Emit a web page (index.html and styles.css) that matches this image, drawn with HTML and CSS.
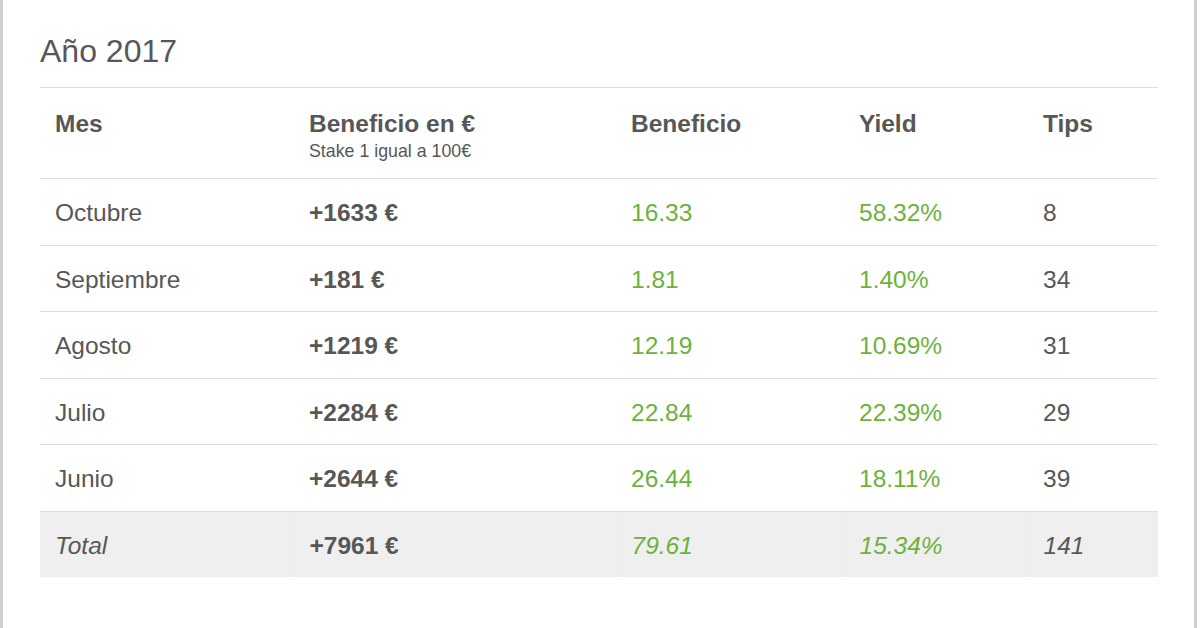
FILE: index.html
```html
<!DOCTYPE html>
<html lang="es">
<head>
<meta charset="utf-8">
<title>Año 2017</title>
<link rel="stylesheet" href="styles.css">
</head>
<body>
<div class="frame">
  <div class="panel">
    <h2 class="title">Año 2017</h2>
    <table class="stats">
      <colgroup>
        <col class="c1"><col class="c2"><col class="c3"><col class="c4"><col class="c5">
      </colgroup>
      <thead>
        <tr>
          <th>Mes</th>
          <th>Beneficio en €<span class="sub">Stake 1 igual a 100€</span></th>
          <th>Beneficio</th>
          <th>Yield</th>
          <th>Tips</th>
        </tr>
      </thead>
      <tbody>
        <tr><td>Octubre</td><td class="b">+1633 €</td><td class="g">16.33</td><td class="g">58.32%</td><td>8</td></tr>
        <tr><td>Septiembre</td><td class="b">+181 €</td><td class="g">1.81</td><td class="g">1.40%</td><td>34</td></tr>
        <tr><td>Agosto</td><td class="b">+1219 €</td><td class="g">12.19</td><td class="g">10.69%</td><td>31</td></tr>
        <tr><td>Julio</td><td class="b">+2284 €</td><td class="g">22.84</td><td class="g">22.39%</td><td>29</td></tr>
        <tr><td>Junio</td><td class="b">+2644 €</td><td class="g">26.44</td><td class="g">18.11%</td><td>39</td></tr>
        <tr class="total"><td class="i">Total</td><td class="b">+7961 €</td><td class="g i">79.61</td><td class="g i">15.34%</td><td class="i">141</td></tr>
      </tbody>
    </table>
  </div>
</div>
</body>
</html>
```
FILE: styles.css
```css
html, body {
  margin: 0;
  padding: 0;
  background: #fff;
}
body {
  font-family: "Liberation Sans", Arial, sans-serif;
  color: #575757;
}
.frame {
  width: 1200px;
  height: 628px;
  box-sizing: border-box;
  padding: 0 3px 0 0;
  background: #fff;
}
.panel {
  height: 628px;
  box-sizing: border-box;
  border-left: 3px solid #cfcfcf;
  border-right: 3px solid #cfcfcf;
  padding: 33px 36px 0 37px;
}
.title {
  margin: 0;
  font-weight: normal;
  font-size: 32px;
  line-height: 37px;
  color: #575757;
  height: 54px;
}
.stats {
  width: 1118px;
  border-collapse: collapse;
  table-layout: fixed;
  font-size: 24.5px;
}
.c1 { width: 254px; }
.c2 { width: 322px; }
.c3 { width: 228px; }
.c4 { width: 184px; }
.c5 { width: 130px; }
.stats th {
  text-align: left;
  font-weight: bold;
  vertical-align: top;
  padding: 21px 15px 0 15px;
  height: 69px;
  line-height: 29px;
  border-top: 1px solid #dedede;
  border-bottom: 1px solid #dedede;
}
.sub {
  display: block;
  font-weight: normal;
  font-size: 17.8px;
  line-height: 20px;
  margin-top: 3px;
}
.stats td {
  padding: 3px 15px 0 15px;
  height: 62.5px;
  line-height: 28px;
  vertical-align: middle;
  border-bottom: 1px solid #dedede;
}
.stats td.b { font-weight: bold; }
.stats td.g { color: #6cb23d; }
.stats td.i { font-style: italic; }
.stats tr.total td {
  background: #efefef;
  border-bottom: none;
  border-left: 1px solid #ececec;
}
.stats tr.total td:first-child { border-left: none; }
```
